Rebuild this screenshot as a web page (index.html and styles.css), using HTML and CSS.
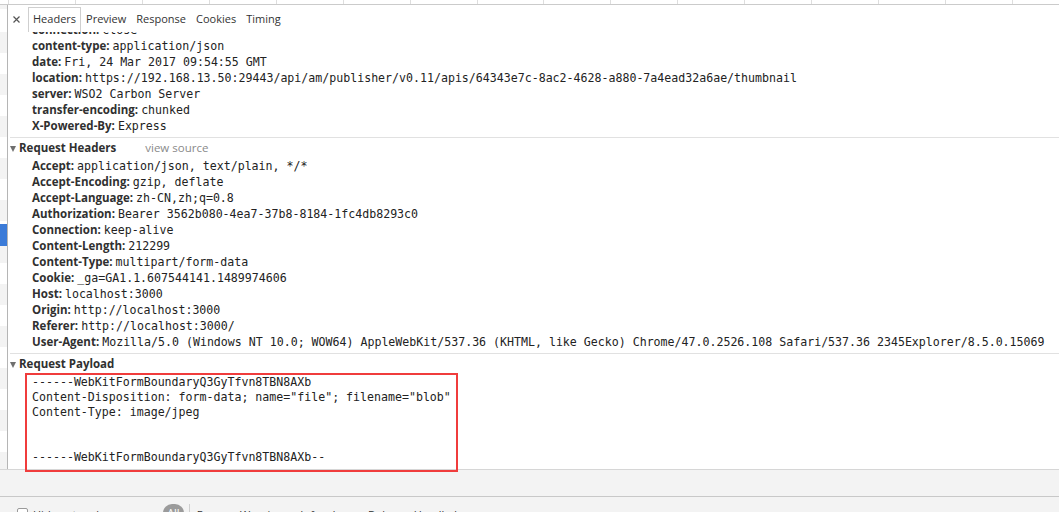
FILE: index.html
```html
<!DOCTYPE html>
<html>
<head>
<meta charset="utf-8">
<link rel="stylesheet" href="styles.css">
</head>
<body>
<div class="overview"></div>
<div class="main">
  <div class="sidebar"></div>
  <div class="detail">
    <div class="tabbar">
      <span class="close"><svg width="7" height="7" viewBox="0 0 7 7"><path d="M0.5 0.5L6.5 6.5M6.5 0.5L0.5 6.5" stroke="#555" stroke-width="1.2" fill="none"/></svg></span>
      <div class="tab active">Headers</div>
      <div class="tab">Preview</div>
      <div class="tab">Response</div>
      <div class="tab">Cookies</div>
      <div class="tab">Timing</div>
    </div>
    <div class="content">
      <div class="section first">
        <div class="clip"><div class="row"><span class="k">connection:</span> <span class="v">close</span></div></div>
        <div class="row"><span class="k">content-type:</span> <span class="v">application/json</span></div>
        <div class="row"><span class="k">date:</span> <span class="v">Fri, 24 Mar 2017 09:54:55 GMT</span></div>
        <div class="row"><span class="k">location:</span> <span class="v">https://192.168.13.50:29443/api/am/publisher/v0.11/apis/64343e7c-8ac2-4628-a880-7a4ead32a6ae/thumbnail</span></div>
        <div class="row"><span class="k">server:</span> <span class="v">WSO2 Carbon Server</span></div>
        <div class="row"><span class="k">transfer-encoding:</span> <span class="v">chunked</span></div>
        <div class="row"><span class="k">X-Powered-By:</span> <span class="v">Express</span></div>
      </div>
      <div class="section">
        <div class="title"><span class="tri"></span>Request Headers<span class="vs">view source</span></div>
        <div class="row"><span class="k">Accept:</span> <span class="v">application/json, text/plain, */*</span></div>
        <div class="row"><span class="k">Accept-Encoding:</span> <span class="v">gzip, deflate</span></div>
        <div class="row"><span class="k">Accept-Language:</span> <span class="v">zh-CN,zh;q=0.8</span></div>
        <div class="row"><span class="k">Authorization:</span> <span class="v">Bearer 3562b080-4ea7-37b8-8184-1fc4db8293c0</span></div>
        <div class="row"><span class="k">Connection:</span> <span class="v">keep-alive</span></div>
        <div class="row"><span class="k">Content-Length:</span> <span class="v">212299</span></div>
        <div class="row"><span class="k">Content-Type:</span> <span class="v">multipart/form-data</span></div>
        <div class="row"><span class="k">Cookie:</span> <span class="v">_ga=GA1.1.607544141.1489974606</span></div>
        <div class="row"><span class="k">Host:</span> <span class="v">localhost:3000</span></div>
        <div class="row"><span class="k">Origin:</span> <span class="v">http://localhost:3000</span></div>
        <div class="row"><span class="k">Referer:</span> <span class="v">http://localhost:3000/</span></div>
        <div class="row"><span class="k">User-Agent:</span> <span class="v">Mozilla/5.0 (Windows NT 10.0; WOW64) AppleWebKit/537.36 (KHTML, like Gecko) Chrome/47.0.2526.108 Safari/537.36 2345Explorer/8.5.0.15069</span></div>
      </div>
      <div class="section">
        <div class="title"><span class="tri"></span>Request Payload</div>
        <pre class="payload">------WebKitFormBoundaryQ3GyTfvn8TBN8AXb
Content-Disposition: form-data; name="file"; filename="blob"
Content-Type: image/jpeg


------WebKitFormBoundaryQ3GyTfvn8TBN8AXb--</pre>
      </div>
    </div>
  </div>
</div>
<div class="drawer">
  <div class="drawer-top"></div>
  <div class="toolbar">
    <span class="check"></span>
    <span class="tlabel">Hide network messages</span>
    <span class="pill">All</span>
    <span class="sep"></span>
    <span class="flt">Errors</span>
    <span class="flt">Warnings</span>
    <span class="flt">Info</span>
    <span class="flt">Logs</span>
    <span class="flt">Debug</span>
    <span class="flt">Handled</span>
  </div>
</div>
</body>
</html>
```
FILE: styles.css
```css
* { box-sizing: border-box; }
html, body { margin: 0; padding: 0; }
body {
  width: 1059px;
  height: 512px;
  overflow: hidden;
  background: #fff;
  font-family: "Open Sans", "Liberation Sans", Arial, sans-serif;
  font-size: 11.5px;
  color: #303030;
}
.overview {
  height: 5px;
  border-bottom: 1px solid #cbcbcb;
  background-image: repeating-linear-gradient(to right, #dedede 0 1px, transparent 1px 66.93px);
  background-position: 8px 0;
}
.main {
  display: flex;
  height: 464px;
}
.sidebar {
  width: 8px;
  flex: none;
  border-right: 1px solid #b5b5b5;
  background:
    linear-gradient(#3b7bd8, #3b7bd8) 0 219px / 100% 22px no-repeat,
    repeating-linear-gradient(to bottom, #fff 0 21px, #f3f3f3 21px 42px);
  background-position: 0 219px, 0 6px;
}
.detail {
  flex: 1;
  min-width: 0;
}
.tabbar {
  height: 27px;
  background: #fff;
  display: flex;
  align-items: flex-end;
  padding-left: 5px;
}
.close {
  width: 15px;
  align-self: flex-start;
  padding-top: 11px;
  display: flex;
}
.tab {
  height: 25px;
  line-height: 22px;
  padding: 0 4px;
  border: 1px solid transparent;
  border-bottom: 0;
  color: #333;
  font-size: 11px;
  white-space: nowrap;
}
.tab.active {
  border-color: #cfcfcf;
  background: #fff;
}
.content {
  padding-left: 2px;
}
.section {
  border-top: 1px solid #e1e1e1;
  padding-top: 2px;
  padding-bottom: 3px;
}
.section.first {
  border-top: 0;
  padding-top: 0;
}
.clip {
  height: 6px;
  overflow: hidden;
  display: flex;
  flex-direction: column;
  justify-content: flex-end;
}
.row {
  height: 16px;
  flex: none;
  line-height: 16px;
  padding-left: 22px;
  white-space: nowrap;
}
.k {
  font-weight: 700;
  color: #303030;
}
.v {
  font-family: "DejaVu Sans Mono", "Liberation Mono", monospace;
  font-size: 11.6px;
  color: #222;
}
.title {
  height: 16px;
  line-height: 16px;
  font-weight: 700;
  color: #303030;
  display: flex;
  align-items: center;
  margin-bottom: 2px;
  white-space: nowrap;
}
.tri {
  width: 0;
  height: 0;
  border-left: 3.5px solid transparent;
  border-right: 3.5px solid transparent;
  border-top: 6px solid #6f6f6f;
  margin-right: 3px;
  margin-top: 1px;
}
.vs {
  font-weight: 400;
  color: #8a8a8a;
  margin-left: 29px;
}
.payload {
  position: relative;
  display: block;
  width: fit-content;
  margin: -1px 0 0 15px;
  padding: 0 5px 5px 5px;
  border: 2px solid #f03c3c;
  font-family: "DejaVu Sans Mono", "Liberation Mono", monospace;
  font-size: 11.6px;
  line-height: 15px;
  color: #222;
}
.drawer {
  background: #f3f3f3;
  height: 43px;
}
.drawer-top {
  height: 28px;
  border-top: 1px solid #d6d6d6;
  border-bottom: 1px solid #c8c8c8;
}
.toolbar {
  display: flex;
  align-items: flex-start;
  padding-top: 10px;
  padding-left: 17px;
  white-space: nowrap;
  color: #333;
  line-height: 16px;
  font-size: 11px;
}
.check {
  width: 11px;
  height: 11px;
  border: 1px solid #9a9a9a;
  border-radius: 2px;
  background: #fff;
  margin-top: 1px;
  margin-right: 5px;
}
.tlabel {
  margin-right: 8px;
}
.pill {
  background: #9b9b9b;
  color: #fff;
  border-radius: 9px;
  padding: 0 4px;
  height: 18px;
  line-height: 18px;
  margin-top: -3px;
}
.sep {
  width: 1px;
  height: 18px;
  background: #cfcfcf;
  margin: -3px 1px 0 5px;
}
.flt {
  padding: 0 6px;
}
```
